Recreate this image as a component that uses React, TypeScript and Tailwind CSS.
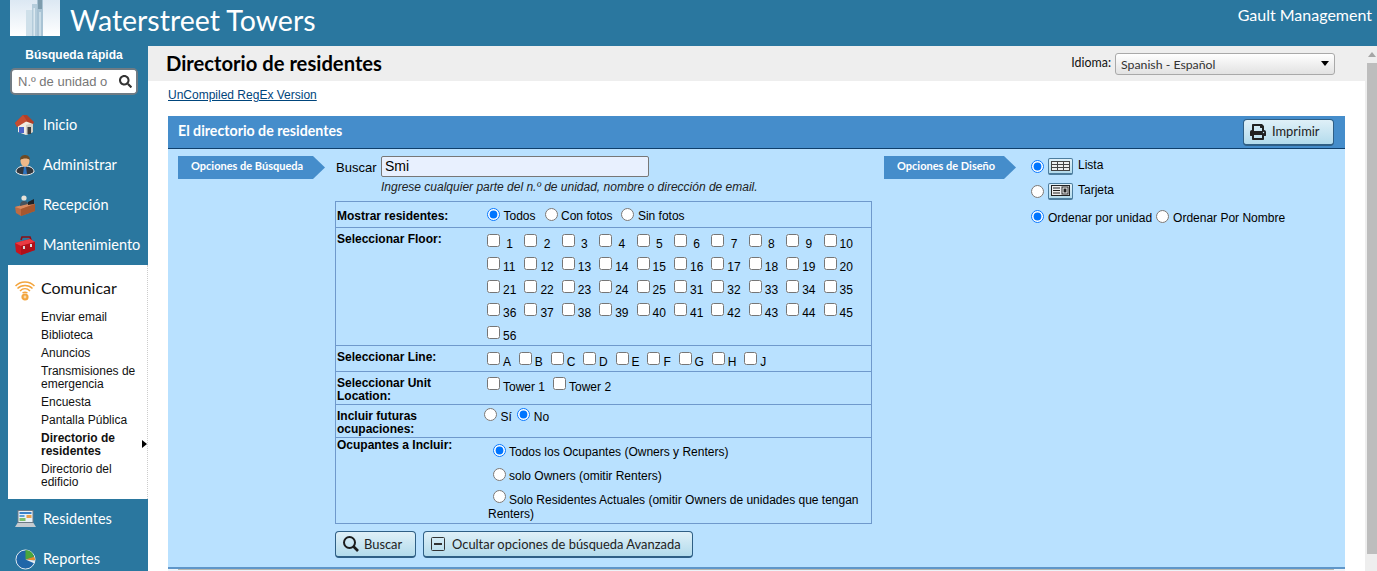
import React from "react";
import { FaPrint, FaSearch } from "react-icons/fa";

const lato = "font-['Lato',sans-serif]";

const HomeIcon = () => (
  <svg width="20" height="20" viewBox="0 0 20 20">
    <path d="M3 9v8l8 3 7-3V8L10 3z" fill="#f1ece1" />
    <path d="M11 20V10l7-2v9z" fill="#d5cfc4" />
    <path d="M0 8 8 0h4l7 7-1 2-8-3-8 6z" fill="#b03f28" />
    <path d="M0 8 8 0l4 6-10 6z" fill="#c54c31" />
    <rect x="4" y="12" width="5" height="6" fill="#4b63c7" />
    <rect x="12.5" y="12" width="3.5" height="7" fill="#3e3e3e" />
  </svg>
);
const ManIcon = () => (
  <svg width="20" height="22" viewBox="0 0 20 22">
    <path d="M1 18c0-4 4-6 9-6s9 2 9 6c-2 2-5 3-9 3s-7-1-9-3z" fill="#33373d" stroke="#f3f3f3" strokeWidth="1" />
    <path d="M9 13h2l1 7h-4z" fill="#2c74c2" />
    <ellipse cx="10" cy="7" rx="4.5" ry="5.5" fill="#eeb98a" />
    <path d="M5 6c0-4 3-5 5-5s5 1 5 5c-2-2-7-2-10 0z" fill="#6d4a24" />
  </svg>
);
const DeskIcon = () => (
  <svg width="21" height="22" viewBox="0 0 21 22">
    <path d="M0 13l15-4 5 1v7L6 22l-5-3z" fill="#bd6b43" />
    <path d="M0 13l6 2 14-5-5-1z" fill="#d98a5f" />
    <path d="M6 15v7l14-5v-7z" fill="#a6572f" />
    <circle cx="9" cy="4" r="2.6" fill="#e7e2d8" />
    <path d="M5 12c0-4 2-5 4-5s4 1 4 3z" fill="#46535e" />
    <path d="M13 8l6-3v5l-6 1z" fill="#1f2328" />
  </svg>
);
const ToolboxIcon = () => (
  <svg width="21" height="20" viewBox="0 0 21 20">
    <path d="M6 5 7 2h8l1 3" fill="none" stroke="#8a0f16" strokeWidth="1.6" />
    <path d="M0 8l15-4 5 3v8L6 20l-5-3z" fill="#c9151f" />
    <path d="M0 8l6 3 14-4-5-3z" fill="#ea3a42" />
    <path d="M6 11v9l14-5V7z" fill="#b01019" />
    <rect x="8" y="11" width="2" height="3" fill="#d9d9d9" />
    <rect x="15" y="9" width="2" height="3" fill="#d9d9d9" />
  </svg>
);
const WifiIcon = () => (
  <svg width="20" height="20" viewBox="0 0 20 20" fill="none" stroke="#f3a53e" strokeWidth="1.5">
    <path d="M0.5 5c5-5.5 14-5.5 19 0" />
    <path d="M2.5 7.5c4-4 11-4 15 0" />
    <path d="M5 10c3-3 7-3 10 0" />
    <path d="M7.5 12c1.5-1 3.5-1 5 0" />
    <circle cx="10" cy="16" r="2.5" fill="#f7d9a8" strokeWidth="2.2" />
  </svg>
);
const LaptopIcon = () => (
  <svg width="21" height="18" viewBox="0 0 21 18">
    <rect x="2.5" y="0" width="16" height="13" fill="#6c7a86" />
    <rect x="3.5" y="1" width="14" height="11" fill="#e7f1f7" />
    <rect x="4.5" y="2" width="12" height="2" fill="#3a82c8" />
    <rect x="4.5" y="5" width="5" height="2" fill="#5ba0d8" />
    <rect x="11.5" y="5" width="5" height="3" fill="#e8a04a" />
    <rect x="4.5" y="8" width="6" height="3" fill="#7cbf6a" />
    <path d="M2.5 13h16l2.5 4H0z" fill="#c4cbd0" />
  </svg>
);
const PieIcon = () => (
  <svg width="21" height="21" viewBox="0 0 22 22">
    <circle cx="11" cy="11" r="10" fill="#1f66a8" stroke="#e8eef2" strokeWidth="1" />
    <path d="M11 11V1a10 10 0 0 1 9 7z" fill="#4aa63c" />
    <path d="M11 11l9-3a10 10 0 0 1 1 4z" fill="#e88e2a" />
    <path d="M11 11l10 1a10 10 0 0 1-1 3z" fill="#e7eef2" />
  </svg>
);

const Tower = () => (
  <div className="w-[50px] h-[36px] bg-gradient-to-b from-[#dce8f3] to-[#ffffff] flex justify-center">
    <svg width="18" height="36" viewBox="0 0 18 36">
      <rect x="0" y="10" width="6" height="26" fill="#cfe0ea" />
      <rect x="6" y="4" width="5" height="32" fill="#b4ccdb" />
      <rect x="11" y="0" width="6" height="36" fill="#a9c3d4" />
      <rect x="12" y="0" width="4" height="9" fill="#7d9cad" />
      <rect x="7.5" y="8" width="1.5" height="28" fill="#dbe8f0" />
      <rect x="13" y="12" width="2" height="24" fill="#c9dce7" />
    </svg>
  </div>
);

const NavItem = ({ icon, label }: { icon: React.ReactNode; label: string }) => (
  <div className="h-10 shrink-0 flex items-center pl-[15px]">
    <span className="w-[28px] flex items-center shrink-0">{icon}</span>
    <span className={`${lato} text-[14.5px] text-white`}>{label}</span>
  </div>
);

const SubItem = ({ children, bold }: { children: React.ReactNode; bold?: boolean }) => (
  <div className={`leading-[13px] ${bold ? "font-bold" : ""}`}>{children}</div>
);

const Btn = ({ children, className = "" }: { children: React.ReactNode; className?: string }) => (
  <div
    className={`${lato} flex items-center h-[27px] whitespace-nowrap rounded-[4px] border border-[#2f5f85] border-b-2 bg-gradient-to-b from-[#dff0f8] to-[#b3dbec] text-[12.9px] text-[#222] ${className}`}
  >
    {children}
  </div>
);

const Tag = ({ children, className = "" }: { children: React.ReactNode; className?: string }) => (
  <div
    className={`${lato} h-[23px] shrink-0 bg-[#458dcb] text-white text-[11px] font-bold flex items-center pb-[3px] [clip-path:polygon(0_0,calc(100%-12px)_0,100%_50%,calc(100%-12px)_100%,0_100%)] ${className}`}
  >
    {children}
  </div>
);

const Check = ({ label }: { label: string }) => (
  <label className="flex items-start gap-[3px]">
    <input type="checkbox" className="mt-0 shrink-0 w-[13px] h-[13px]" />
    <span className="mt-[3px] leading-[14px]">{label}</span>
  </label>
);

const Radio = ({ label, name, checked, top = "mt-[1px]" }: { label: string; name: string; checked?: boolean; top?: string }) => (
  <label className="flex items-start gap-[3.5px]">
    <input type="radio" name={name} defaultChecked={checked} className="shrink-0 w-[13px] h-[13px]" />
    <span className={`${top} leading-[14px]`}>{label}</span>
  </label>
);

const floors = [
  "1","2","3","4","5","6","7","8","9","10",
  "11","12","13","14","15","16","17","18","19","20",
  "21","22","23","24","25","31","32","33","34","35",
  "36","37","38","39","40","41","42","43","44","45",
  "56",
];
const lines = ["A","B","C","D","E","F","G","H","J"];

const Row = ({ label, children, h, lpt, last }: { label: React.ReactNode; children: React.ReactNode; h: string; lpt: string; last?: boolean }) => (
  <div className={`flex ${h} ${last ? "" : "border-b border-[#6f99cc]"}`}>
    <div className={`w-[151px] shrink-0 pl-[1px] font-bold leading-[13px] ${lpt}`}>{label}</div>
    <div className="flex-1 min-w-0">{children}</div>
  </div>
);

const ListIcon = () => (
  <span className="w-[25px] h-[17px] rounded-[2px] border border-[#4d7d9e] border-b-2 bg-gradient-to-b from-[#e2f1f9] to-[#b3dbec] flex items-center justify-center">
    <svg width="19" height="10" viewBox="0 0 19 10" fill="#eee" stroke="#444" strokeWidth="1">
      <rect x="0.5" y="0.5" width="18" height="9" />
      <path d="M0.5 3.5h18M0.5 6.5h18M6.5 0.5v9M12.5 0.5v9" />
    </svg>
  </span>
);
const CardIcon = () => (
  <span className="w-[25px] h-[17px] rounded-[2px] border border-[#4d7d9e] border-b-2 bg-gradient-to-b from-[#e2f1f9] to-[#b3dbec] flex items-center justify-center">
    <svg width="19" height="11" viewBox="0 0 19 11">
      <rect x="0.5" y="0.5" width="18" height="10" fill="#eee" stroke="#222" />
      <path d="M2 3h7M2 5.5h7M2 8h7" stroke="#222" strokeWidth="1" />
      <rect x="11" y="2" width="6" height="7" fill="#fff" stroke="#222" />
      <rect x="12.5" y="3.5" width="3" height="4" fill="#222" />
    </svg>
  </span>
);

export default function App() {
  return (
    <div className="w-[1377px] h-[571px] overflow-hidden flex flex-col bg-white font-['Liberation_Sans',Arial,sans-serif] text-[12px] text-black">
      <header className="h-[46px] shrink-0 bg-[#2a779f] flex items-start pl-[10px] pr-[5px] text-white">
        <Tower />
        <div className={`${lato} ml-[10px] mt-[1px] text-[28.5px] leading-[38px]`}>Waterstreet Towers</div>
        <div className={`${lato} ml-auto mt-[4px] text-[16px] leading-[22px]`}>Gault Management</div>
      </header>

      <div className="flex flex-1 min-h-0">
        <aside className="w-[148px] shrink-0 bg-[#2a779f] flex flex-col">
          <div className="shrink-0 text-center font-bold text-white leading-[14px] mt-[2px]">Búsqueda rápida</div>
          <div className="shrink-0 relative ml-[10px] mt-[6px] w-[128px] h-[27px] rounded-[5px] border-2 border-[#6f7b84] bg-white flex items-center pl-[6px] overflow-hidden">
            <span className="text-[13px] text-[#777] whitespace-nowrap">N.º de unidad o</span>
            <span className="absolute right-0 top-0 bottom-0 w-[22px] bg-white flex items-center justify-center">
              <FaSearch className="text-[#333] text-[13px]" />
            </span>
          </div>
          <div className="mt-[10px] shrink-0">
            <NavItem icon={<HomeIcon />} label="Inicio" />
            <NavItem icon={<ManIcon />} label="Administrar" />
            <NavItem icon={<DeskIcon />} label="Recepción" />
            <NavItem icon={<ToolboxIcon />} label="Mantenimiento" />
          </div>
          <div className="relative shrink-0 ml-[8px] h-[234px] bg-white border-r border-dotted border-[#ccc]">
            <div className="flex items-center pl-[7px] h-[46px]">
              <span className="w-[26px] shrink-0 mt-[6px]"><WifiIcon /></span>
              <span className={`${lato} text-[16px] text-[#111]`}>Comunicar</span>
            </div>
            <div className="pl-[33px] pr-[6px] flex flex-col gap-[5px] text-[#111]">
              <SubItem>Enviar email</SubItem>
              <SubItem>Biblioteca</SubItem>
              <SubItem>Anuncios</SubItem>
              <SubItem>Transmisiones de emergencia</SubItem>
              <SubItem>Encuesta</SubItem>
              <SubItem>Pantalla Pública</SubItem>
              <SubItem bold>Directorio de residentes</SubItem>
              <SubItem>Directorio del edificio</SubItem>
            </div>
            <span className="absolute right-0 top-[175px] w-0 h-0 border-y-[4px] border-y-transparent border-l-[5px] border-l-black" />
          </div>
          <NavItem icon={<LaptopIcon />} label="Residentes" />
          <NavItem icon={<PieIcon />} label="Reportes" />
        </aside>

        <main className="w-[1217px] shrink-0 flex flex-col min-h-0">
          <div className="h-[35px] shrink-0 bg-[#eeeeee] flex items-center pl-[18px] pr-[30px]">
            <h1 className={`${lato} text-[20.2px] font-bold leading-none text-black`}>Directorio de residentes</h1>
            <span className={`${lato} ml-auto text-[12.4px] text-[#111] mr-[4px]`}>Idioma:</span>
            <div className={`${lato} relative w-[220px] h-[22px] rounded-[3px] border border-[#a9a9a9] bg-gradient-to-b from-[#ffffff] to-[#e2e2e2] text-[12.3px] text-[#333] flex items-center pl-[5px] pt-[3px]`}>
              Spanish - Español
              <span className="absolute right-[5px] top-[7px] w-0 h-0 border-x-[4px] border-x-transparent border-t-[5px] border-t-black" />
            </div>
          </div>

          <div className="pl-[20px] pr-[20px] flex-1 min-h-0 flex flex-col">
            <a className="mt-[7px] shrink-0 leading-[14px] text-[#00457c] underline">UnCompiled RegEx Version</a>
            <section className="mt-[14px] shrink-0 flex flex-col">
              <div className="h-[33px] bg-[#458dcb] border-b border-[#0f3f6b] flex items-center pl-[10px] pr-[11px]">
                <span className={`${lato} text-[14.2px] font-bold text-white mt-[-3px]`}>El directorio de residentes</span>
                <Btn className="ml-auto w-[91px] pl-[6px] gap-[6px]">
                  <FaPrint className="text-[#222] text-[16px]" />
                  <span className="mt-[1px]">Imprimir</span>
                </Btn>
              </div>
              <div className="h-[420px] bg-[#b9e1ff] border-b-2 border-[#5f96c9] flex items-start pt-[7px] pl-[10px]">
                <Tag className="w-[147px] pl-[13px]">Opciones de Búsqueda</Tag>
                <div className="ml-[10px] w-[537px] shrink-0">
                  <div className="flex items-start pl-[1px]">
                    <span className="w-[45px] mt-[5px] leading-[14px] text-[13px]">Buscar</span>
                    <div className="w-[268px] h-[21px] rounded-[2px] border border-[#777] bg-[#e8f0fe] text-[14px] pl-[3px] leading-[19px]">Smi</div>
                  </div>
                  <div className="pl-[46px] mt-[3px] italic leading-[14px] text-[#222]">Ingrese cualquier parte del n.º de unidad, nombre o dirección de email.</div>
                  <div className="mt-[7px] border border-[#6f99cc] flex flex-col">
                    <Row h="h-[26px]" lpt="pt-[8px]" label="Mostrar residentes:">
                      <div className="flex gap-[9px] pt-[6px]">
                        <Radio name="m" checked label="Todos" />
                        <Radio name="m" label="Con fotos" />
                        <Radio name="m" label="Sin fotos" />
                      </div>
                    </Row>
                    <Row h="h-[118px]" lpt="pt-[5px]" label="Seleccionar Floor:">
                      <div className="grid grid-cols-[repeat(10,37.4px)] auto-rows-[23px] pt-[6px]">
                        {floors.map((f) => (
                          <Check key={f} label={f.length === 1 ? `\u00a0${f}` : f} />
                        ))}
                      </div>
                    </Row>
                    <Row h="h-[26px]" lpt="pt-[5px]" label="Seleccionar Line:">
                      <div className="flex gap-[7.8px] pt-[6px]">
                        {lines.map((l) => (
                          <Check key={l} label={l} />
                        ))}
                      </div>
                    </Row>
                    <Row h="h-[33px]" lpt="pt-[5px]" label={<>Seleccionar Unit<br />Location:</>}>
                      <div className="flex gap-[8px] pt-[5px]">
                        <Check label="Tower 1" />
                        <Check label="Tower 2" />
                      </div>
                    </Row>
                    <Row h="h-[33px]" lpt="pt-[5px]" label={<>Incluir futuras<br />ocupaciones:</>}>
                      <div className="flex gap-[5.5px] pt-[3px] ml-[-3px]">
                        <Radio name="f" top="mt-[2px]" label="Sí" />
                        <Radio name="f" top="mt-[2px]" checked label="No" />
                      </div>
                    </Row>
                    <Row h="h-[85px]" last lpt="pt-[1px]" label="Ocupantes a Incluir:">
                      <div className="pl-[1px] flex flex-col pt-[6px] pr-[6px]">
                        <label className="pl-[5px] flex items-start gap-[3px]">
                          <input type="radio" name="o" defaultChecked className="w-[13px] h-[13px] shrink-0" />
                          <span className="leading-[14px] mt-[1px]">Todos los Ocupantes (Owners y Renters)</span>
                        </label>
                        <label className="pl-[5px] flex items-start gap-[3px] mt-[9px]">
                          <input type="radio" name="o" className="w-[13px] h-[13px] shrink-0" />
                          <span className="leading-[14px] mt-[1px]">solo Owners (omitir Renters)</span>
                        </label>
                        <label className="leading-[14px] mt-[7px]">
                          <input type="radio" name="o" className="w-[13px] h-[13px] ml-[5px] mr-[3px] align-[1px]" />
                          Solo Residentes Actuales (omitir Owners de unidades que tengan Renters)
                        </label>
                      </div>
                    </Row>
                  </div>
                  <div className="mt-[7px] flex gap-[7px]">
                    <Btn className="w-[81px] pl-[6px] gap-[4px]">
                      <svg width="18" height="18" viewBox="0 0 18 18" fill="none" stroke="#1c1c1c" strokeWidth="2">
                        <circle cx="7.5" cy="7.5" r="5.5" />
                        <path d="M11.5 11.5 16 16" strokeWidth="2.6" />
                      </svg>
                      <span className="mt-[1px]">Buscar</span>
                    </Btn>
                    <Btn className="w-[270px] pl-[7px] gap-[7px]">
                      <svg width="14" height="14" viewBox="0 0 14 14" fill="none" stroke="#333">
                        <rect x="0.5" y="0.5" width="13" height="13" rx="1" />
                        <path d="M3 7h8" strokeWidth="2" />
                      </svg>
                      <span className="mt-[1px]">Ocultar opciones de búsqueda Avanzada</span>
                    </Btn>
                  </div>
                </div>
                <Tag className="ml-[12px] w-[132px] pl-[13px]">Opciones de Diseño</Tag>
                <div className="ml-[15px] flex flex-col">
                  <label className="flex items-center gap-[4px] h-[20px]">
                    <input type="radio" name="d" defaultChecked className="w-[13px] h-[13px]" />
                    <ListIcon />
                    <span className="ml-[1px] mt-[-2px]">Lista</span>
                  </label>
                  <label className="flex items-center gap-[4px] h-[20px] mt-[5px]">
                    <input type="radio" name="d" className="w-[13px] h-[13px]" />
                    <CardIcon />
                    <span className="ml-[1px] mt-[-2px]">Tarjeta</span>
                  </label>
                  <div className="flex gap-[4px] mt-[9px]">
                    <label className="flex items-start gap-[4px]">
                      <input type="radio" name="s" defaultChecked className="w-[13px] h-[13px]" />
                      <span className="mt-[1px] leading-[14px]">Ordenar por unidad</span>
                    </label>
                    <label className="flex items-start gap-[4px]">
                      <input type="radio" name="s" className="w-[13px] h-[13px]" />
                      <span className="mt-[1px] leading-[14px]">Ordenar Por Nombre</span>
                    </label>
                  </div>
                </div>
              </div>
              <div className="h-[6px] bg-[#edf3f8] pl-[10px] pr-[11px]">
                <div className="h-[1px] bg-[#b9b9b0]" />
              </div>
            </section>
          </div>
        </main>

        <div className="w-[12px] shrink-0 bg-[#eeeeee] flex flex-col items-end">
          <div className="w-[10px] h-[17px] flex items-center justify-center">
            <span className="w-0 h-0 border-x-[4px] border-x-transparent border-b-[5px] border-b-[#a5a5a5]" />
          </div>
          <div className="w-[10px] h-[491px] bg-[#bdbdbd]" />
        </div>
      </div>
    </div>
  );
}
